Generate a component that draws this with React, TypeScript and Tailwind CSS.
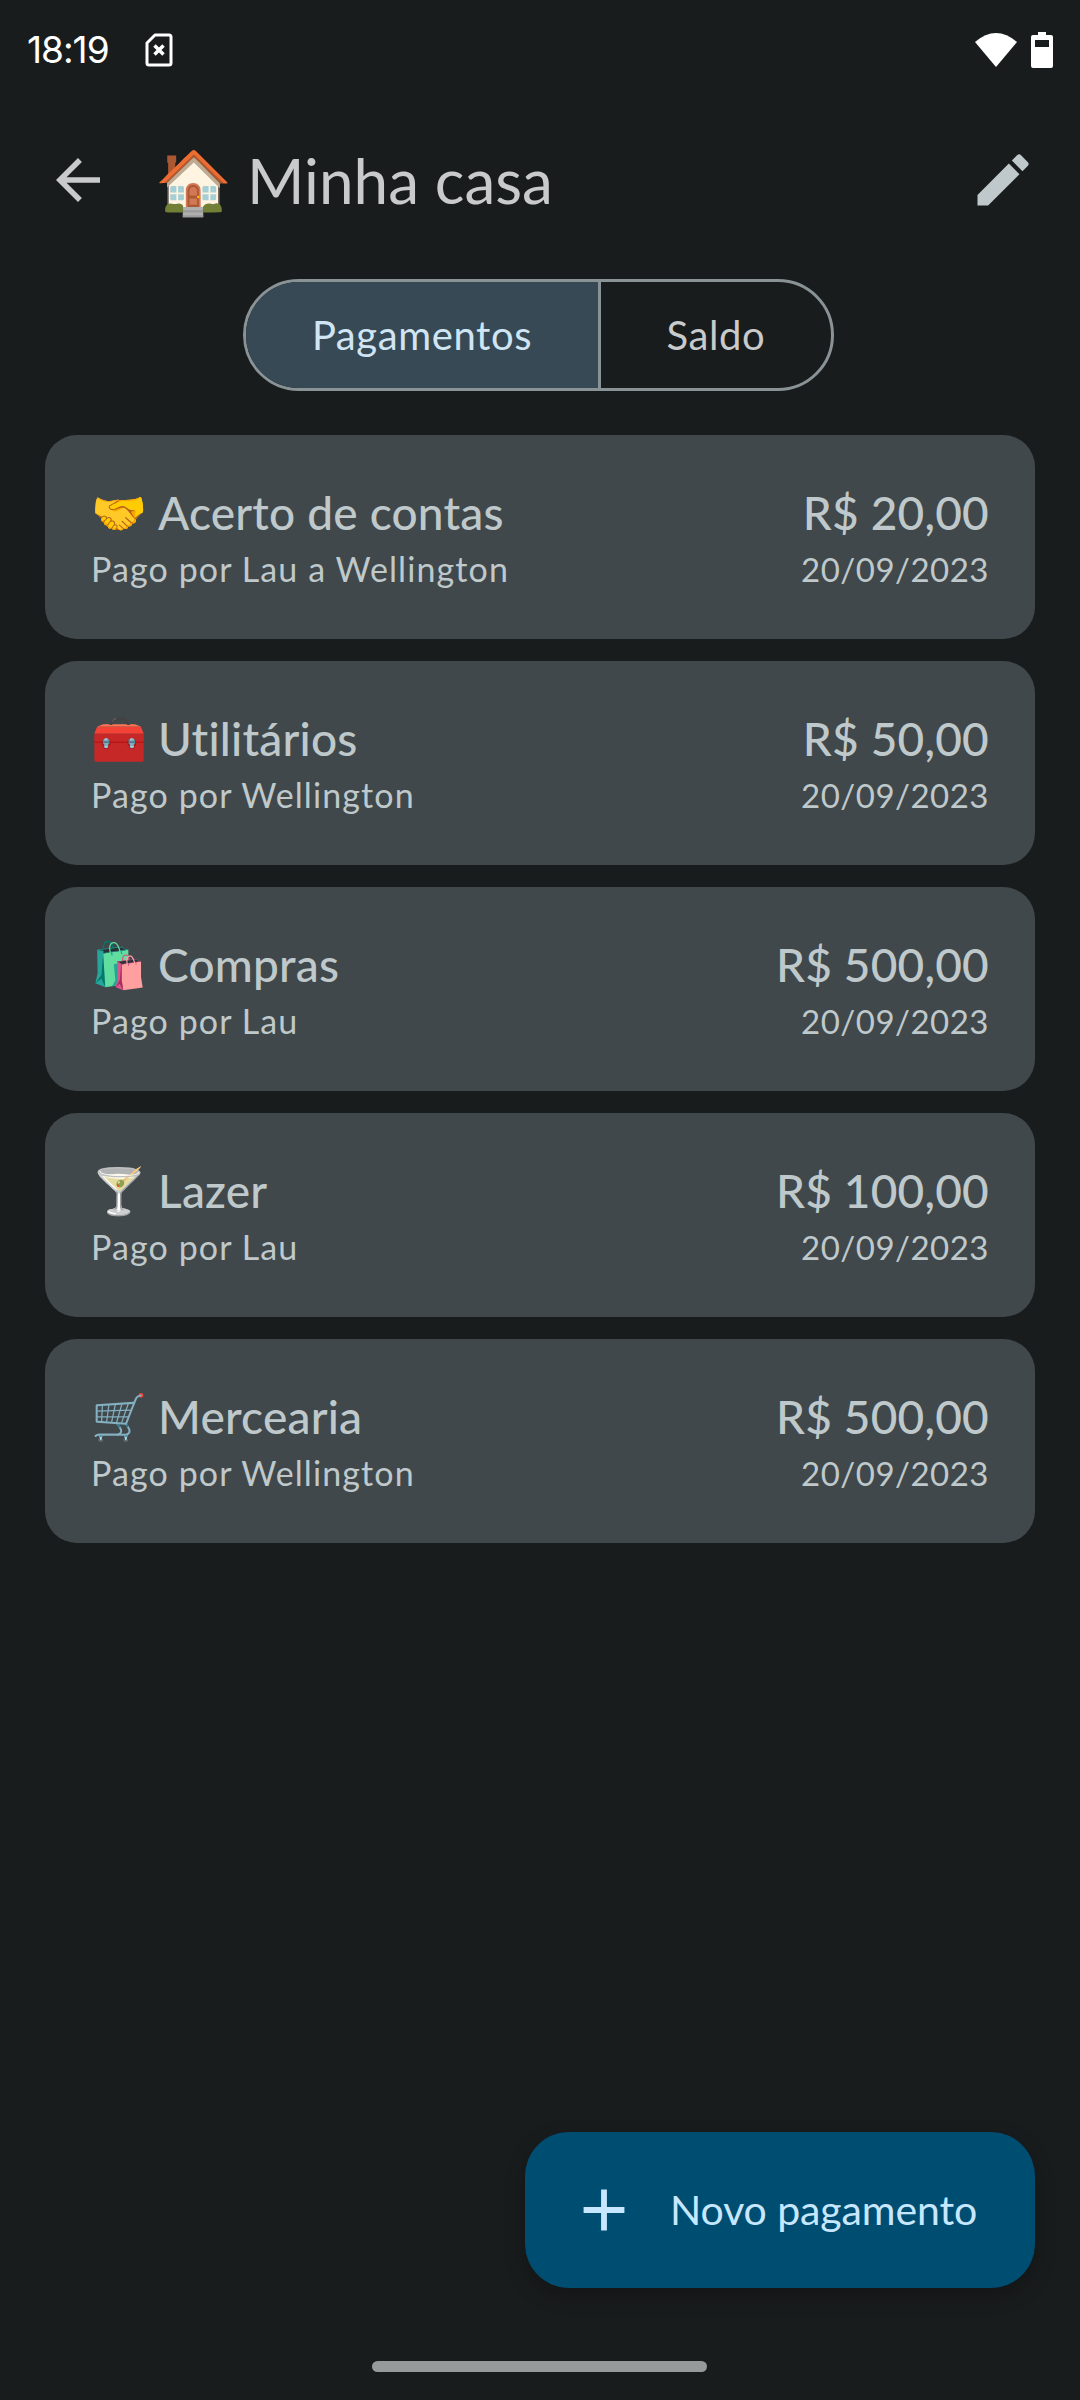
const payments = [
  { emoji: '🤝', title: 'Acerto de contas', by: 'Pago por Lau a Wellington', value: 'R$ 20,00' },
  { emoji: '🧰', title: 'Utilitários', by: 'Pago por Wellington', value: 'R$ 50,00' },
  { emoji: '🛍️', title: 'Compras', by: 'Pago por Lau', value: 'R$ 500,00' },
  { emoji: '🍸', title: 'Lazer', by: 'Pago por Lau', value: 'R$ 100,00' },
  { emoji: '🛒', title: 'Mercearia', by: 'Pago por Wellington', value: 'R$ 500,00' },
];

function PaymentCard({ emoji, title, by, value }: (typeof payments)[number]) {
  return (
    <div className="h-[204px] rounded-[32px] bg-[#40484b] pl-[46px] pr-[46px] flex items-center justify-between text-[#bfc8ca]">
      <div className="flex flex-col">
        <div className="flex items-center h-[60px] mt-[4px] text-[46px] font-medium tracking-[0.2px]">
          <span className="w-[67px] text-[45px] leading-none">{emoji}</span>
          <span>{title}</span>
        </div>
        <span className="text-[34px] leading-[54px] tracking-[1.1px]">{by}</span>
      </div>
      <div className="flex flex-col items-end">
        <span className="h-[60px] mt-[4px] flex items-center text-[46px] font-medium tracking-[0.2px]">{value}</span>
        <span className="text-[33px] leading-[54px] tracking-[0.5px]">20/09/2023</span>
      </div>
    </div>
  );
}

export default function App() {
  return (
    <div className="relative h-[2400px] w-[1080px] overflow-hidden bg-[#191c1d] font-['Lato',sans-serif]">
      {/* Status bar */}
      <div className="flex h-[100px] items-center justify-between pl-[27px] pr-[27px] text-white">
        <div className="flex items-center gap-[36px]">
          <span className="text-[37px] font-['Inter',sans-serif] tracking-[-1px]">18:19</span>
          <svg width="28" height="34" viewBox="0 0 28 34" fill="none" stroke="white" strokeWidth="3">
            <path d="M10 2h14a2 2 0 0 1 2 2v26a2 2 0 0 1-2 2H4a2 2 0 0 1-2-2V10z" strokeLinejoin="round" />
            <path d="M9.500 12.500l9 9M18.500 12.500l-9 9" strokeWidth="3.500" />
          </svg>
        </div>
        <div className="flex items-center gap-[14px]">
          <svg width="42" height="36" viewBox="0 0 42 36" fill="white">
            <path d="M21 35L0 10Q21-8 42 10z" />
          </svg>
          <svg width="22" height="36" viewBox="0 0 22 36">
            <path fill="white" d="M7 0h8v3h5a2 2 0 0 1 2 2v29a2 2 0 0 1-2 2H2a2 2 0 0 1-2-2V5a2 2 0 0 1 2-2h5z" />
            <rect x="4" y="8" width="14" height="7" fill="#191c1d" />
          </svg>
        </div>
      </div>

      {/* Top bar */}
      <div className="flex h-[160px] items-center justify-between pl-[45px] pr-[43px] text-[#c8cacb]">
        <div className="flex items-center">
          <svg width="66" height="66" viewBox="0 0 24 24" fill="#c8cacb">
            <path d="M20 11H7.830l5.590-5.590L12 4l-8 8 8 8 1.410-1.410L7.830 13H20v-2z" />
          </svg>
          <span className="ml-[44px] text-[62px] leading-none">🏠</span>
          <span className="ml-[15px] text-[62px]">Minha casa</span>
        </div>
        <svg width="68" height="68" viewBox="0 0 24 24" fill="#bfc8ca">
          <path d="M3 17.250V21h3.750L17.810 9.940l-3.750-3.750L3 17.250zM20.710 7.040a1 1 0 0 0 0-1.410l-2.340-2.340a1 1 0 0 0-1.410 0l-1.830 1.830 3.750 3.750 1.830-1.830z" />
        </svg>
      </div>

      {/* Segmented toggle */}
      <div className="mt-[19px] flex justify-center pr-[3px]">
        <div className="flex h-[112px] w-[591px] overflow-hidden rounded-full border-[3px] border-[#899295] text-[40px] tracking-[0.6px]">
          <div className="flex w-[355px] items-center justify-center border-r-[3px] border-[#899295] bg-[#384956] text-[#d0e5f4]">
            Pagamentos
          </div>
          <div className="flex flex-1 items-center justify-center text-[#c8cacb]">Saldo</div>
        </div>
      </div>

      {/* Payments */}
      <div className="mt-[44px] flex flex-col gap-[22px] pl-[45px] pr-[45px]">
        {payments.map((p) => (
          <PaymentCard key={p.title} {...p} />
        ))}
      </div>

      {/* FAB */}
      <div className="absolute left-[525px] top-[2132px] flex h-[156px] w-[510px] items-center rounded-[44px] bg-[#004d72] pl-[44px] text-[#c7e7ff] shadow-[0_8px_20px_rgba(0,0,0,0.25)]">
        <svg width="70" height="70" viewBox="0 0 24 24" fill="#c7e7ff">
          <path d="M19 13h-6v6h-2v-6H5v-2h6V5h2v6h6v2z" />
        </svg>
        <span className="ml-[31px] text-[41px] tracking-[-0.1px]">Novo pagamento</span>
      </div>

      {/* Gesture bar */}
      <div className="absolute left-[372px] top-[2361px] h-[11px] w-[335px] rounded-full bg-[#979a9a]" />
    </div>
  );
}
